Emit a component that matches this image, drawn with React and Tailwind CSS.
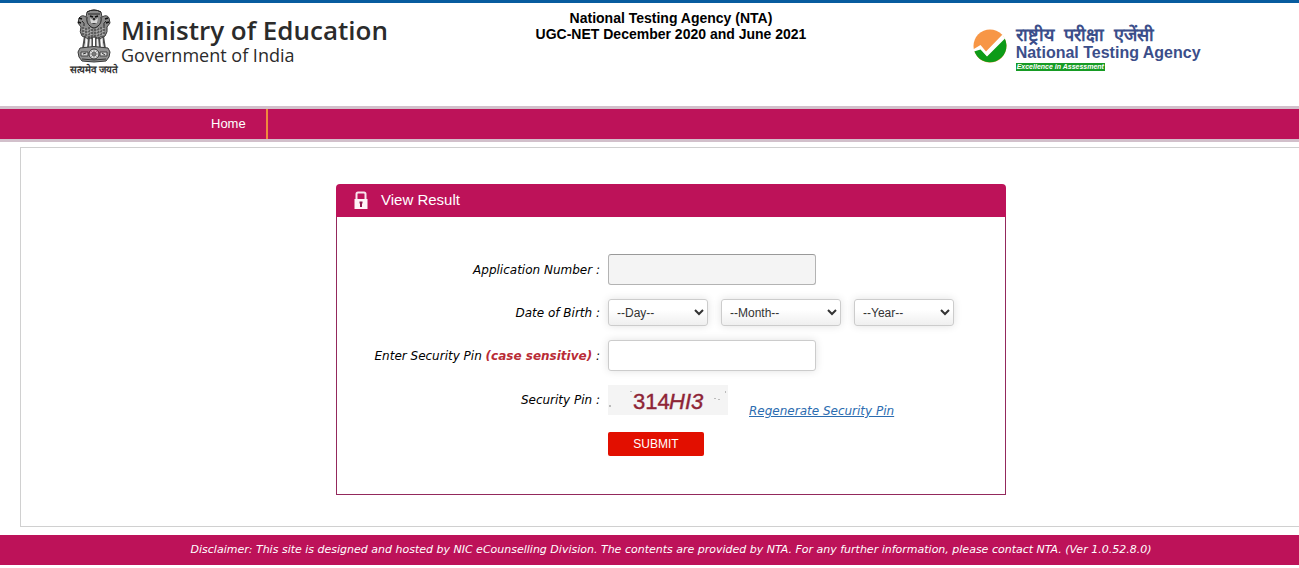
import React, { useState } from "react";

const days = Array.from({ length: 31 }, (_, i) => i + 1);
const years = Array.from({ length: 60 }, (_, i) => 2005 - i);
const months = [
  "January", "February", "March", "April", "May", "June",
  "July", "August", "September", "October", "November", "December",
];

const Emblem = () => (
  <svg viewBox="0 0 48 54" className="h-[54px] w-12" fill="none" aria-hidden="true">
    {/* manes */}
    <path d="M17 3q7-4 14 0l1 5q5-3 7 1l1 5-3 4q1 5-2 9l-5 3-6-2-6 2-6-3q-3-4-1-9l-3-4 1-5q3-4 7-1z" fill="#8b8b8b" stroke="#3a3a3a" />
    <path d="M17 3q7-4 14 0M18 5h12M17 8q-1 6 3 9M31 8q1 6-3 9M20 17q4 4 8 0M12 12q3 2 2 5M36 12q-3 2-2 5" stroke="#252525" />
    <path d="M20 7l3 1M28 7l-3 1M23 10h2M21 13q3 2 6 0M9 9l3 1M38 9l-3 1M8 13l3 1M39 13l-3 1" stroke="#111" strokeWidth="1.5" />
    <path d="M20 9l4 3 4-3-1 5h-6z" fill="#d8d8d8" />
    <path d="M13 18v8M16 19v9M19 18v10M22 20v9M25 20v9M28 19v9M31 18v10M34 17v9" stroke="#333" strokeDasharray="2 1" />
    <path d="M14 20v6M18 21v6M21 19v7M27 19v7M30 21v6M33 19v7" stroke="#c9c9c9" strokeDasharray="1 2" />
    {/* legs */}
    <path d="M15 27l-2 13M19 28l-1 12M22 28v12M26 28v12M29 28l1 12M33 27l2 13" stroke="#4b4b4b" strokeWidth="2" />
    <path d="M16 29l-1 9M21 30v8M27 30v8M32 29l1 9" stroke="#d6d6d6" />
    {/* abacus with the wheel */}
    <path d="M10 39q14-3 28 0l2 4-1 5-3 4q-12 2-24 0l-3-4-1-5z" fill="#929292" stroke="#383838" />
    <path d="M11 43h7v4h-7zM30 43h7v4h-7z" fill="#d4d4d4" stroke="#444" />
    <path d="M13 45l3-1M32 44l3 2M12 50q12 2 24 0" stroke="#333" />
    <circle cx="24" cy="45" r="5" fill="#dcdcdc" stroke="#333" />
    <circle cx="24" cy="45" r="2" fill="#888" stroke="#555" />
    <path d="M24 41v8M20 45h8M21 42l6 6M27 42l-6 6" stroke="#777" strokeWidth=".6" />
  </svg>
);

const NtaMark = () => (
  <svg viewBox="0 0 34 34" className="mt-0.5 h-[34px] w-[34px]" aria-hidden="true">
    <circle cx="17" cy="17" r="16.5" fill="#f79646" />
    <path d="M1 21l7-1 6 7L31.500 9A16.500 16.500 0 1 1 1 21z" fill="#0d9b18" />
    <path d="M0 20.500L7.500 16l5.500 6.500L29.500 5.500 32 9.500 14 27.500l-6.500-7L1 22.500z" fill="#fff" />
  </svg>
);

const LockIcon = () => (
  <svg viewBox="0 0 14 19" className="h-[19px] w-3.5" aria-hidden="true">
    <path d="M2.500 9V3q0-1.500 1.500-1.500h6q1.500 0 1.500 1.500v6" fill="none" stroke="#f9e4ee" strokeWidth="2" />
    <path d="M.5 8h13v10H.5z" fill="#fff3f8" />
    <path d="M5.500 10.500h3v2H8V16H6v-3.500h-.5z" fill="#8f174c" />
  </svg>
);

const Captcha = () => (
  <svg viewBox="0 0 120 30" className="h-[30px] w-[120px] bg-[#f4f4f4]" role="img" aria-label="Security pin">
    <g fill="#8e2436" stroke="#8e2436" strokeWidth=".4" fontFamily="'Liberation Sans', Arial, sans-serif" fontSize="22">
      <text x="25" y="24">314</text>
      <text x="61" y="24" fontStyle="italic">HI3</text>
    </g>
    <path d="M1 20h2v2H1zM106 13h2v1h-2zM110 14h2v1h-2zM22 6h2v1h-2zM117 6h1v2h-1z" fill="#bbb" />
  </svg>
);

const Row = ({ label, htmlFor, children }) => (
  <div className="flex items-center gap-2">
    <label htmlFor={htmlFor} className="w-[263px] shrink-0 text-right text-xs text-black italic">
      {label}
    </label>
    {children}
  </div>
);

const DateSelect = ({ id, label, placeholder, options, className }) => (
  <select
    id={id}
    aria-label={label}
    defaultValue=""
    className={`h-[27px] rounded-[3px] border border-[#ccc] bg-linear-to-b from-white from-40% to-[#efefef] px-1 font-['Liberation_Sans',Arial,sans-serif] text-xs text-[#333] shadow-[0_0_8px_rgba(0,0,0,0.12)] ${className}`}
  >
    <option value="">{placeholder}</option>
    {options.map((option) => (
      <option key={option}>{option}</option>
    ))}
  </select>
);

const App = () => {
  const [applicationNumber, setApplicationNumber] = useState("");
  const [pin, setPin] = useState("");

  const handleSubmit = (e) => {
    e.preventDefault();
  };

  return (
    <div className="overflow-hidden bg-white font-['Liberation_Sans',Arial,sans-serif]">
      {/* the page runs a little wider than the window */}
      <div className="w-[calc(100%+43px)]">
        <header className="grid h-[106px] grid-cols-3 border-t-3 border-[#075c9f]">
          <div className="flex gap-[3px] pt-1.5 pl-[70px]">
            <div className="flex w-12 flex-col items-center">
              <Emblem />
              <span className="text-[10px] leading-[14px] font-bold whitespace-nowrap text-[#333]">सत्यमेव जयते</span>
            </div>
            <div className="pt-[7px] font-['Open_Sans',sans-serif] whitespace-nowrap text-[#2b2b2b]">
              <h1 className="text-[26px] leading-7 font-semibold">Ministry of Education</h1>
              <p className="text-lg leading-[22px]">Government of India</p>
            </div>
          </div>
          <div className="pt-[7px] text-center text-sm leading-4 font-bold text-black">
            <p>National Testing Agency (NTA)</p>
            <p>UGC-NET December 2020 and June 2021</p>
          </div>
          <div className="flex gap-[9px] pt-6 pl-[78px]">
            <NtaMark />
            <div className="whitespace-nowrap text-[#3b4e8a]">
              <p className="flex gap-2.5 text-lg leading-4 font-semibold">
                <span>राष्ट्रीय</span> <span>परीक्षा</span> <span>एजेंसी</span>
              </p>
              <p className="text-base leading-5 font-bold">National Testing Agency</p>
              <p className="w-fit bg-[#169b24] px-px text-[7px] leading-2 font-bold text-white italic">
                Excellence in Assessment
              </p>
            </div>
          </div>
        </header>

        <nav className="flex h-9 border-y-3 border-[#d2c0cb] bg-[#bd1259] pl-[190px]">
          <a href="#home" className="border-r-2 border-[#f08a3c] pr-5 pl-[21px] text-[13px] leading-[30px] text-white">
            Home
          </a>
        </nav>

        <main className="mx-5 mt-[5px] border border-[#d0d0d0] pt-9 pb-[31px]">
          <section className="mx-auto w-[670px]">
            <h2 className="flex h-[33px] items-center gap-[13px] rounded-t bg-[#bd1259] pl-[18px] text-[15px] text-white">
              <LockIcon />
              View Result
            </h2>
            <form
              onSubmit={handleSubmit}
              className="flex flex-col gap-3.5 border border-t-0 border-[#93295c] pt-[37px] pb-[38px] font-['DejaVu_Sans',Verdana,sans-serif]"
            >
              <Row label="Application Number :" htmlFor="appno">
                <input
                  id="appno"
                  type="text"
                  value={applicationNumber}
                  onChange={(e) => setApplicationNumber(e.target.value)}
                  className="h-[31px] w-52 rounded-[3px] border border-[#b3b3b3] border-t-[#999] bg-[#f4f4f4] px-2 text-xs"
                />
              </Row>
              <Row label="Date of Birth :" htmlFor="day">
                <div className="flex gap-[13px]">
                  <DateSelect id="day" label="Day" placeholder="--Day--" options={days} className="w-[100px]" />
                  <DateSelect id="month" label="Month" placeholder="--Month--" options={months} className="w-[120px]" />
                  <DateSelect id="year" label="Year" placeholder="--Year--" options={years} className="w-[100px]" />
                </div>
              </Row>
              <Row
                label={
                  <>
                    Enter Security Pin <b className="text-[#b92c36]">(case sensitive)</b> :
                  </>
                }
                htmlFor="pin"
              >
                <input
                  id="pin"
                  type="text"
                  value={pin}
                  onChange={(e) => setPin(e.target.value)}
                  className="h-[31px] w-52 rounded-[3px] border border-[#ccc] bg-white px-2 text-xs shadow-[0_0_8px_rgba(0,0,0,0.12)]"
                />
              </Row>
              <Row label="Security Pin :">
                <Captcha />
                <a href="#regenerate" className="ml-[13px] self-end text-xs leading-2 text-[#2b6cb0] italic underline">
                  Regenerate Security Pin
                </a>
              </Row>
              <div className="pt-[3px] pl-[271px]">
                <button
                  type="submit"
                  className="block h-6 w-24 rounded-[2px] bg-[#e20f00] font-['Liberation_Sans',Arial,sans-serif] text-xs text-white"
                >
                  SUBMIT
                </button>
              </div>
            </form>
          </section>
        </main>

        <footer className="mt-2 bg-[#bd1259] text-center font-['DejaVu_Sans',Verdana,sans-serif] text-[11px] leading-[30px] text-white italic">
          Disclaimer: This site is designed and hosted by NIC eCounselling Division. The contents are provided by NTA. For any
          further information, please contact NTA. (Ver 1.0.52.8.0)
        </footer>
      </div>
    </div>
  );
};

export default App;
